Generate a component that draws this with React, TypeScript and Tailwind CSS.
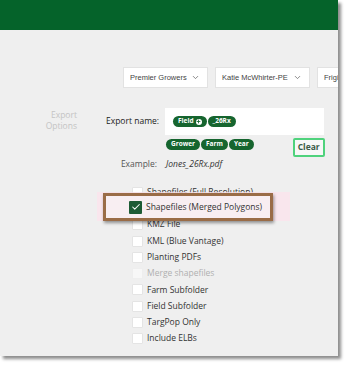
import { ChevronDown, Check, Plus } from "lucide-react";

const options = [
  { label: "Shapefiles (Full Resolution)" },
  { label: "Shapefiles (Merged Polygons)", checked: true },
  { label: "KMZ File" },
  { label: "KML (Blue Vantage)" },
  { label: "Planting PDFs" },
  { label: "Merge shapefiles", disabled: true },
  { label: "Farm Subfolder" },
  { label: "Field Subfolder" },
  { label: "TargPop Only" },
  { label: "Include ELBs" },
];

function Chip({ children }: { children: React.ReactNode }) {
  return (
    <span className="inline-flex items-center gap-[2px] h-[11px] px-[5px] rounded-full bg-[#16652f] text-white text-[6.5px] font-bold leading-none">
      {children}
    </span>
  );
}

function Select({ label, width }: { label: string; width: string }) {
  return (
    <div
      className={`${width} shrink-0 h-[21px] bg-white border border-[#e2e2e2] flex items-center justify-between pl-[6px] pr-[7px] text-[7.5px] text-[#444]`}
      style={{ fontFamily: "'Liberation Sans', sans-serif" }}
    >
      <span className="whitespace-nowrap overflow-hidden">{label}</span>
      <ChevronDown className="w-[9px] h-[9px] shrink-0 text-[#666]" strokeWidth={2} />
    </div>
  );
}

export default function App() {
  return (
    <div className="w-[348px] h-[367px] bg-white relative" style={{ fontFamily: "'Open Sans', sans-serif" }}>
      <div className="w-[338px] h-[356px] bg-[#efefef] overflow-hidden shadow-[3px_3px_3px_rgba(0,0,0,0.45)] relative">
        <div className="h-[30px] bg-[#05632a]" />

        <div className="flex gap-[7px] pl-[123px] pt-[37px]">
          <Select label="Premier Growers" width="w-[85px]" />
          <Select label="Katie McWhirter-PE" width="w-[95px]" />
          <Select label="Frigid Acres" width="w-[80px]" />
        </div>

        <div className="flex mt-[20px]">
          <div className="w-[77px] text-right text-[#c4c4c4] text-[8.5px] leading-[11px] pt-[1px]">
            Export
            <br />
            Options
          </div>

          <div className="flex flex-col">
            <div className="flex items-center">
              <div className="w-[59px] text-right pr-[8px] text-[8.5px] text-[#222] ml-[29px] whitespace-nowrap">
                Export name:
              </div>
              <div className="w-[159px] h-[27px] bg-white flex items-center gap-[1px] pl-[8px]">
                <Chip>
                  Field
                  <span className="w-[6px] h-[6px] rounded-full bg-white flex items-center justify-center">
                    <Plus className="w-[5px] h-[5px] text-[#16652f]" strokeWidth={4} />
                  </span>
                </Chip>
                <Chip>_26Rx</Chip>
              </div>
            </div>

            <div className="flex items-start mt-[3px] pl-[89px]">
              <div className="flex gap-[1px] pt-[1px]">
                <Chip>Grower</Chip>
                <Chip>Farm</Chip>
                <Chip>Year</Chip>
              </div>
              <button className="ml-[39px] w-[32px] h-[19px] border-2 border-[#4fd27c] rounded-[2px] bg-[#f7f7f7] text-[8.5px] font-bold text-[#3b5a46] flex items-center justify-center">
                Clear
              </button>
            </div>

            <div className="flex items-center h-[12px] mt-[1px]">
              <div className="w-[59px] text-right pr-[8px] text-[8.5px] text-[#555] ml-[29px]">Example:</div>
              <div className="text-[8.5px] italic text-[#333] pl-[1px]">Jones_26Rx.pdf</div>
            </div>

            <div className="flex flex-col mt-[14px] pl-[55px]">
              {options.map((o) => (
                <div key={o.label} className="flex items-center gap-[4px] h-[16.3px]">
                  <span
                    className={`w-[11px] h-[11px] rounded-[1px] border ${
                      o.disabled ? "bg-[#f7f7f7] border-[#eeeeee]" : "bg-white border-[#e4e4e4]"
                    }`}
                  />
                  <span
                    className={`text-[8.5px] whitespace-nowrap ${
                      o.disabled ? "text-[#b0b0b0]" : "text-[#333]"
                    }`}
                  >
                    {o.label}
                  </span>
                </div>
              ))}
            </div>
          </div>
        </div>

        <div className="absolute left-[97px] top-[192px] w-[193px] h-[29px] bg-[#fbe3ec]/80" />
        <div className="absolute left-[103px] top-[193px] w-[170px] h-[28px] border-[3px] border-[#9a6c47] bg-[#f8eef2] shadow-[1px_2px_3px_rgba(0,0,0,0.4)] flex items-center pl-[23px] gap-[4px]">
          <span className="w-[13px] h-[13px] rounded-[1px] bg-[#1d5b35] flex items-center justify-center">
            <Check className="w-[10px] h-[10px] text-white" strokeWidth={2.5} />
          </span>
          <span className="text-[8.5px] text-[#333] whitespace-nowrap">Shapefiles (Merged Polygons)</span>
        </div>
      </div>
    </div>
  );
}
